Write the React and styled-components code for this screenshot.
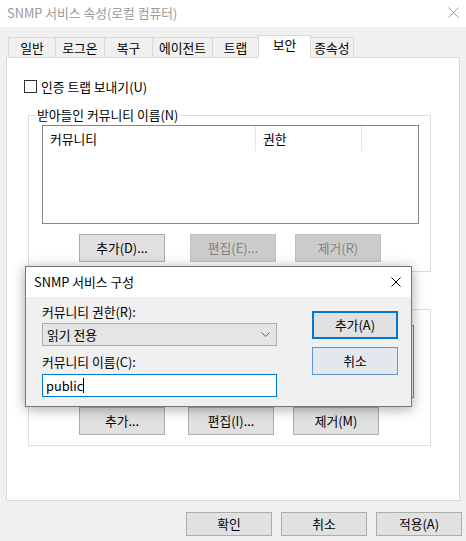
import React from "react";
import styled, { createGlobalStyle } from "styled-components";

const GlobalStyle = createGlobalStyle`
  html, body {
    margin: 0;
    padding: 0;
    background: #f0f0f0;
  }
  body {
    font-family: "Noto Sans CJK KR", "Noto Sans", sans-serif;
    font-size: 12.8px;
    color: #000;
  }
`;

const tabs = [
  { label: "일반", width: 48 },
  { label: "로그온", width: 50 },
  { label: "복구", width: 49 },
  { label: "에이전트", width: 61 },
  { label: "트랩", width: 47 },
  { label: "보안", width: 53, active: true },
  { label: "종속성", width: 44 },
];

const CloseIcon = ({ size = 11, color = "#999" }) => (
  <svg width={size} height={size} viewBox={`0 0 ${size} ${size}`}>
    <path
      d={`M0.5 0.5 L${size - 0.5} ${size - 0.5} M${size - 0.5} 0.5 L0.5 ${size - 0.5}`}
      stroke={color}
      strokeWidth="1"
      fill="none"
    />
  </svg>
);

const Chevron = () => (
  <svg width="9" height="5" viewBox="0 0 9 5">
    <path d="M0.5 0.5 L4.5 4.5 L8.5 0.5" stroke="#606060" fill="none" />
  </svg>
);

const App = () => {
  return (
    <Window>
      <GlobalStyle />
      <TitleBar>
        <TitleText>SNMP 서비스 속성(로컬 컴퓨터)</TitleText>
        <CloseIcon />
      </TitleBar>

      <Body>
        <TabStrip>
          {tabs.map((t) => (
            <Tab key={t.label} $width={t.width} $active={t.active}>
              {t.label}
            </Tab>
          ))}
        </TabStrip>

        <Panel>
          <CheckRow>
            <CheckBox />
            <span>인증 트랩 보내기(U)</span>
          </CheckRow>

          <Group>
            <Legend>받아들인 커뮤니티 이름(N)</Legend>
            <ListView $width={377} $height={99}>
              <ListHeader>
                <HeaderCell $width={213}>커뮤니티</HeaderCell>
                <HeaderCell $width={106}>권한</HeaderCell>
              </ListHeader>
            </ListView>
            <ButtonRow $top={10}>
              <PushButton $ml={37}>추가(D)...</PushButton>
              <PushButton $ml={25} disabled>
                편집(E)...
              </PushButton>
              <PushButton $ml={19} disabled>
                제거(R)
              </PushButton>
            </ButtonRow>
          </Group>

          {/* second frame: its caption sits under the dialog */}
          <Group $top={37} $padTop={15} $padBottom={10}>
            <ListView $width={372} $height={73} />
            <ButtonRow $top={9}>
              <PushButton $ml={37}>추가...</PushButton>
              <PushButton $ml={23}>편집(I)...</PushButton>
              <PushButton $ml={19}>제거(M)</PushButton>
            </ButtonRow>
          </Group>
        </Panel>

        <Footer>
          <FooterButton>확인</FooterButton>
          <FooterButton>취소</FooterButton>
          <FooterButton>적용(A)</FooterButton>
        </Footer>
      </Body>

      <Dialog>
        <DialogTitleBar>
          <span>SNMP 서비스 구성</span>
          <CloseIcon size={10} color="#000" />
        </DialogTitleBar>
        <DialogBody>
          <FieldColumn>
            <FieldLabel>커뮤니티 권한(R):</FieldLabel>
            <Combo>
              <span>읽기 전용</span>
              <Chevron />
            </Combo>
            <FieldLabel $top={8}>커뮤니티 이름(C):</FieldLabel>
            <TextBox>
              public
              <Caret />
            </TextBox>
          </FieldColumn>
          <DialogActions>
            <DialogButton $primary>추가(A)</DialogButton>
            <DialogButton $hover>취소</DialogButton>
          </DialogActions>
        </DialogBody>
      </Dialog>
    </Window>
  );
};

export default App;

const Window = styled.div`
  position: relative;
  width: 466px;
  height: 541px;
  background: #f0f0f0;
  overflow: hidden;
`;

const TitleBar = styled.div`
  height: 27px;
  background: #fff;
  display: flex;
  align-items: center;
  justify-content: space-between;
  padding: 0 7px 2px 7px;
  box-sizing: border-box;
`;

const TitleText = styled.span`
  color: #999;
  line-height: 16px;
`;

const Body = styled.div`
  padding: 8px 0 0 6px;
`;

const TabStrip = styled.div`
  display: flex;
  align-items: flex-end;
  height: 22px;
  padding-left: 2px;
`;

const Tab = styled.div`
  position: relative;
  z-index: ${(p) => (p.$active ? 2 : 1)};
  box-sizing: border-box;
  width: ${(p) => p.$width}px;
  height: ${(p) => (p.$active ? 23 : 20)}px;
  margin-left: -1px;
  margin-bottom: ${(p) => (p.$active ? -1 : 0)}px;
  border: 1px solid #d9d9d9;
  border-bottom: none;
  background: ${(p) => (p.$active ? "#fff" : "#f0f0f0")};
  display: flex;
  justify-content: center;
  align-items: ${(p) => (p.$active ? "flex-start" : "center")};
  padding-top: ${(p) => (p.$active ? 1 : 0)}px;
  line-height: 16px;

  &:first-child {
    margin-left: 0;
  }
`;

const Panel = styled.div`
  box-sizing: border-box;
  width: 454px;
  height: 444px;
  border: 1px solid #d9d9d9;
  background: #fff;
  padding: 21px 0 0 17px;
`;

const CheckRow = styled.div`
  display: flex;
  align-items: center;
  gap: 4px;
  height: 15px;
  line-height: 16px;
`;

const CheckBox = styled.div`
  box-sizing: border-box;
  width: 13px;
  height: 13px;
  border: 1px solid #333;
  background: #fff;
`;

const Group = styled.fieldset`
  box-sizing: border-box;
  width: 403px;
  margin: ${(p) => p.$top ?? 13}px 0 0 4px;
  padding: ${(p) => p.$padTop ?? 2}px 11px ${(p) => p.$padBottom ?? 9}px 13px;
  border: 1px solid #dcdcdc;
  min-width: 0;
`;

const Legend = styled.legend`
  margin-left: -7px;
  padding: 0 2px;
  line-height: 16px;
`;

const ListView = styled.div`
  box-sizing: border-box;
  width: ${(p) => p.$width}px;
  height: ${(p) => p.$height}px;
  border: 1px solid #828790;
  background: #fff;
`;

const ListHeader = styled.div`
  display: flex;
  height: 25px;
`;

const HeaderCell = styled.div`
  box-sizing: border-box;
  width: ${(p) => p.$width}px;
  padding-left: 7px;
  border-right: 1px solid #e5e5e5;
  display: flex;
  align-items: center;
  line-height: 16px;
`;

const ButtonRow = styled.div`
  display: flex;
  margin-top: ${(p) => p.$top}px;
`;

const PushButton = styled.div`
  box-sizing: border-box;
  width: 86px;
  height: 28px;
  margin-left: ${(p) => p.$ml}px;
  display: flex;
  align-items: center;
  justify-content: center;
  line-height: 16px;
  border: 1px solid ${(p) => (p.disabled ? "#bfbfbf" : "#adadad")};
  background: ${(p) => (p.disabled ? "#cccccc" : "#e1e1e1")};
  color: ${(p) => (p.disabled ? "#838383" : "#000")};
`;

const Footer = styled.div`
  display: flex;
  justify-content: flex-end;
  gap: 9px;
  margin-top: 11px;
  padding-right: 4px;
`;

const FooterButton = styled.div`
  box-sizing: border-box;
  width: 86px;
  height: 24px;
  display: flex;
  align-items: center;
  justify-content: center;
  line-height: 16px;
  border: 1px solid #adadad;
  background: #e1e1e1;
`;

const Dialog = styled.div`
  position: absolute;
  left: 25px;
  top: 266px;
  box-sizing: border-box;
  width: 387px;
  height: 141px;
  border: 1px solid #767676;
  background: #f0f0f0;
  box-shadow: 0 2px 12px rgba(0, 0, 0, 0.35);
`;

const DialogTitleBar = styled.div`
  height: 30px;
  background: #fff;
  display: flex;
  align-items: center;
  justify-content: space-between;
  padding: 0 10px 0 8px;
  line-height: 16px;
`;

const DialogBody = styled.div`
  display: flex;
  gap: 35px;
  padding: 7px 13px 0 16px;
`;

const FieldColumn = styled.div`
  display: flex;
  flex-direction: column;
  width: 235px;
`;

const FieldLabel = styled.div`
  line-height: 16px;
  margin-top: ${(p) => p.$top ?? 0}px;
  margin-bottom: 3px;
`;

const Combo = styled.div`
  box-sizing: border-box;
  height: 23px;
  border: 1px solid #adadad;
  background: #e5e5e5;
  display: flex;
  align-items: center;
  justify-content: space-between;
  padding: 0 6px 0 4px;
  line-height: 16px;
`;

const TextBox = styled.div`
  box-sizing: border-box;
  height: 23px;
  margin-top: 1px;
  border: 1px solid #0078d7;
  background: #fff;
  display: flex;
  align-items: center;
  padding-left: 3px;
  line-height: 16px;
`;

const Caret = styled.span`
  display: inline-block;
  width: 1px;
  height: 15px;
  background: #000;
`;

const DialogActions = styled.div`
  display: flex;
  flex-direction: column;
  gap: 8px;
  padding-top: 7px;
`;

const DialogButton = styled.div`
  box-sizing: border-box;
  width: 86px;
  height: 28px;
  display: flex;
  align-items: center;
  justify-content: center;
  line-height: 16px;
  border: ${(p) => (p.$primary ? "2px solid #0078d7" : "1px solid #5d98d3")};
  background: ${(p) => (p.$hover ? "#e2e8ee" : "#e1e1e1")};
`;
